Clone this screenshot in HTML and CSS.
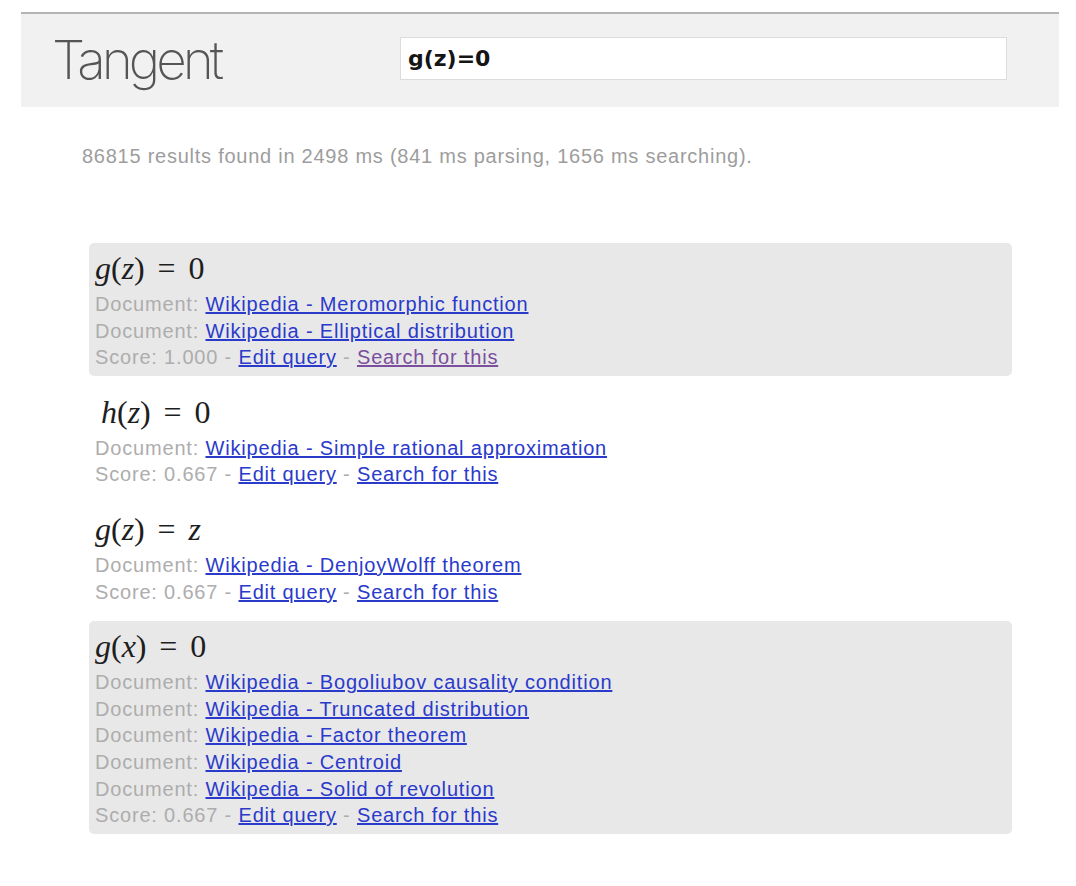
FILE: index.html
```html
<!DOCTYPE html>
<html>
<head>
<meta charset="utf-8">
<title>Tangent</title>
<link rel="stylesheet" href="styles.css">
</head>
<body>
<header class="topbar">
  <div class="logo">Tangent</div>
  <input class="query" type="text" value="g(z)=0">
</header>
<main class="results">
  <p class="stats">86815 results found in 2498 ms (841 ms parsing, 1656 ms searching).</p>

  <section class="result shaded">
    <div class="math"><span class="mi">g</span><span class="mo">(</span><span class="mi">z</span><span class="mo">)</span><span class="rel">=</span><span class="mn">0</span></div>
    <div class="line"><span class="label">Document: </span><a class="link" href="#">Wikipedia - Meromorphic function</a></div>
    <div class="line"><span class="label">Document: </span><a class="link" href="#">Wikipedia - Elliptical distribution</a></div>
    <div class="line"><span class="label">Score: 1.000 - </span><a class="link" href="#">Edit query</a><span class="label"> - </span><a class="link visited" href="#">Search for this</a></div>
  </section>

  <section class="result">
    <div class="math indent"><span class="mi">h</span><span class="mo">(</span><span class="mi">z</span><span class="mo">)</span><span class="rel">=</span><span class="mn">0</span></div>
    <div class="line"><span class="label">Document: </span><a class="link" href="#">Wikipedia - Simple rational approximation</a></div>
    <div class="line"><span class="label">Score: 0.667 - </span><a class="link" href="#">Edit query</a><span class="label"> - </span><a class="link" href="#">Search for this</a></div>
  </section>

  <section class="result">
    <div class="math"><span class="mi">g</span><span class="mo">(</span><span class="mi">z</span><span class="mo">)</span><span class="rel">=</span><span class="mi">z</span></div>
    <div class="line"><span class="label">Document: </span><a class="link" href="#">Wikipedia - DenjoyWolff theorem</a></div>
    <div class="line"><span class="label">Score: 0.667 - </span><a class="link" href="#">Edit query</a><span class="label"> - </span><a class="link" href="#">Search for this</a></div>
  </section>

  <section class="result shaded">
    <div class="math"><span class="mi">g</span><span class="mo">(</span><span class="mi">x</span><span class="mo">)</span><span class="rel">=</span><span class="mn">0</span></div>
    <div class="line"><span class="label">Document: </span><a class="link" href="#">Wikipedia - Bogoliubov causality condition</a></div>
    <div class="line"><span class="label">Document: </span><a class="link" href="#">Wikipedia - Truncated distribution</a></div>
    <div class="line"><span class="label">Document: </span><a class="link" href="#">Wikipedia - Factor theorem</a></div>
    <div class="line"><span class="label">Document: </span><a class="link" href="#">Wikipedia - Centroid</a></div>
    <div class="line"><span class="label">Document: </span><a class="link" href="#">Wikipedia - Solid of revolution</a></div>
    <div class="line"><span class="label">Score: 0.667 - </span><a class="link" href="#">Edit query</a><span class="label"> - </span><a class="link" href="#">Search for this</a></div>
  </section>
</main>
</body>
</html>
```

FILE: styles.css
```css
html, body {
  margin: 0;
  padding: 0;
  background: #ffffff;
}

body {
  padding-top: 12px;
  font-family: "Liberation Sans", Arial, sans-serif;
}

.topbar {
  margin: 0 17px 0 21px;
  height: 95px;
  border-top: 2px solid #b4b4b4;
  background: #f1f1f1;
  display: flex;
  align-items: flex-start;
  box-sizing: border-box;
}

.logo {
  font-family: Inter, "Liberation Sans", sans-serif;
  font-weight: 200;
  font-size: 53px;
  letter-spacing: -4px;
  color: #555555;
  margin-left: 31px;
  margin-top: 14px;
  line-height: 64px;
  width: 348px;
}

.query {
  margin-top: 23px;
  width: 607px;
  height: 43px;
  box-sizing: border-box;
  border: 1px solid #dcdcdc;
  background: #ffffff;
  padding: 0 7px;
  font-family: "DejaVu Sans", Verdana, sans-serif;
  font-weight: bold;
  font-size: 22px;
  color: #151515;
  outline: none;
}

.results {
  margin: 0 64px 0 89px;
}

.stats {
  margin: 36px 0 74px -7px;
  font-size: 20px;
  letter-spacing: 0.75px;
  line-height: 26px;
  color: #9d9d9d;
  white-space: nowrap;
}

.result {
  padding: 6px 6px 5px 6px;
  margin-bottom: 11px;
  border-radius: 5px;
}

.result.shaded {
  background: #e8e8e8;
}

.math {
  font-family: "Liberation Serif", "Times New Roman", serif;
  font-size: 32px;
  line-height: 38px;
  height: 38px;
  margin-bottom: 4px;
  color: #1e1e1e;
}

.math.indent {
  padding-left: 6px;
}

.mi {
  font-style: italic;
}

.rel {
  margin: 0 0.4em;
}

.line {
  font-size: 20px;
  letter-spacing: 0.82px;
  line-height: 26.6px;
  white-space: nowrap;
}

.label {
  color: #adadad;
}

.link {
  color: #2a3acb;
  text-decoration: underline;
}

.link.visited {
  color: #7b4f9e;
}
```
